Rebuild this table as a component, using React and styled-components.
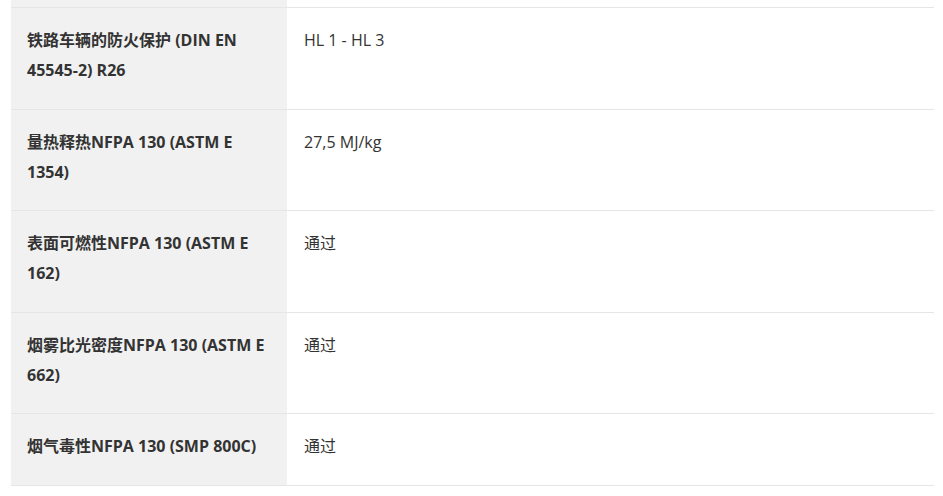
import React from 'react'
import styled, { createGlobalStyle } from 'styled-components'

const GlobalStyle = createGlobalStyle`
  html, body {
    margin: 0;
    padding: 0;
    background: #ffffff;
  }
  body {
    font-family: "Open Sans", "Noto Sans CJK SC", sans-serif;
    color: #333333;
  }
`

const Page = styled.div`
  padding: 0 9px 0 11px;
`

const Table = styled.div`
  display: grid;
  grid-template-columns: 276px 1fr;
`

const Label = styled.div`
  background: #f1f1f1;
  padding: ${p => (p.$clipped ? '0' : '17px 16px 23.5px 16px')};
  height: ${p => (p.$clipped ? '8px' : 'auto')};
  box-sizing: border-box;
  border-bottom: 1px solid #e6e6e6;
  font-size: 16px;
  line-height: 30px;
  font-weight: 700;
  color: #333333;
`

const Value = styled.div`
  padding: ${p => (p.$clipped ? '0' : '17px 17px 23.5px 17px')};
  height: ${p => (p.$clipped ? '8px' : 'auto')};
  box-sizing: border-box;
  border-bottom: 1px solid #e6e6e6;
  font-size: 16px;
  line-height: 30px;
  color: #333333;
`

const rows = [
  ['铁路车辆的防火保护 (DIN EN 45545-2) R26', 'HL 1 - HL 3'],
  ['量热释热NFPA 130 (ASTM E 1354)', '27,5 MJ/kg'],
  ['表面可燃性NFPA 130 (ASTM E 162)', '通过'],
  ['烟雾比光密度NFPA 130 (ASTM E 662)', '通过'],
  ['烟气毒性NFPA 130 (SMP 800C)', '通过'],
]

export default function App () {
  return (
    <>
      <GlobalStyle />
      <Page>
        <Table>
          <Label $clipped />
          <Value $clipped />
          {rows.map(([label, value]) => (
            <React.Fragment key={label}>
              <Label>{label}</Label>
              <Value>{value}</Value>
            </React.Fragment>
          ))}
        </Table>
      </Page>
    </>
  )
}
